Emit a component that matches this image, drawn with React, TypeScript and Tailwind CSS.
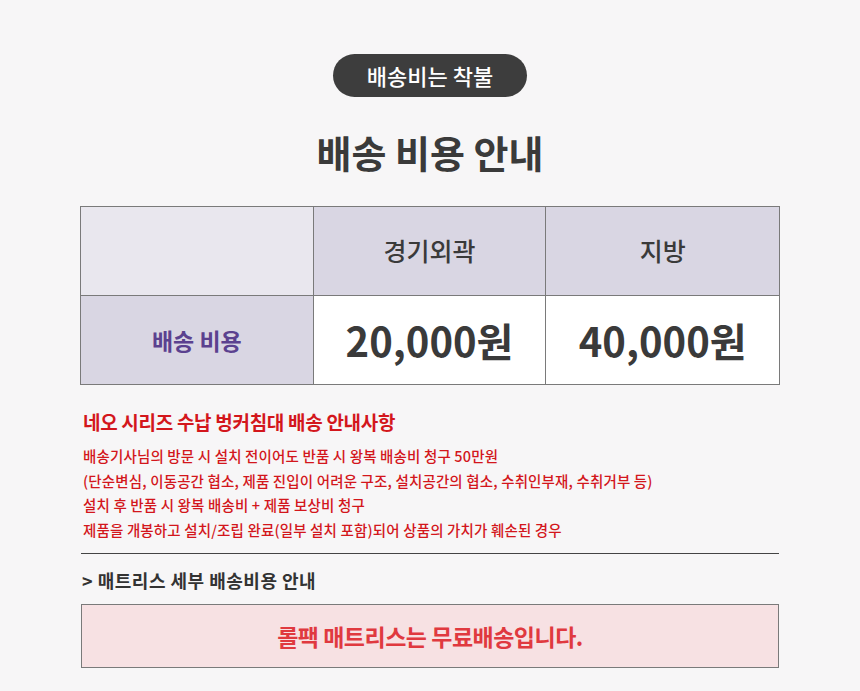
import React from 'react';

const font = { fontFamily: '"Noto Sans CJK KR", "Noto Sans", sans-serif' };

const notices = [
    '배송기사님의 방문 시 설치 전이어도 반품 시 왕복 배송비 청구 50만원',
    '(단순변심, 이동공간 협소, 제품 진입이 어려운 구조, 설치공간의 협소, 수취인부재, 수취거부 등)',
    '설치 후 반품 시 왕복 배송비 + 제품 보상비 청구',
    '제품을 개봉하고 설치/조립 완료(일부 설치 포함)되어 상품의 가치가 훼손된 경우',
];

export default function App() {
    return (
        <div style={font} className="min-h-[691px] w-full bg-[#f7f6f7] flex flex-col items-center pt-[54px]">
            {/* badge */}
            <div className="h-[43px] w-[194px] rounded-full bg-[#3d3d3d] text-white text-[22px] font-medium flex items-center justify-center">
                배송비는 착불
            </div>

            <h1 className="mt-[33px] text-[38px] leading-[44px] font-bold text-[#3a3a3a]">배송 비용 안내</h1>

            {/* table */}
            <div className="mt-[32px] w-[700px] grid grid-cols-3 border border-[#7a7a7a]">
                <div className="h-[89px] bg-[#e9e7ee] border-r border-b border-[#7a7a7a]" />
                <div className="h-[89px] bg-[#d9d6e3] border-r border-b border-[#7a7a7a] flex items-center justify-center text-[25px] font-medium text-[#3a3a3a]">경기외곽</div>
                <div className="h-[89px] bg-[#d9d6e3] border-b border-[#7a7a7a] flex items-center justify-center text-[25px] font-medium text-[#3a3a3a]">지방</div>
                <div className="h-[88px] bg-[#d9d6e3] border-r border-[#7a7a7a] flex items-center justify-center text-[23px] font-bold text-[#5b418f]">배송 비용</div>
                <div className="h-[88px] bg-white border-r border-[#7a7a7a] flex items-center justify-center text-[40px] font-bold text-[#3a3a3a]">20,000원</div>
                <div className="h-[88px] bg-white flex items-center justify-center text-[40px] font-bold text-[#3a3a3a]">40,000원</div>
            </div>

            {/* notice */}
            <div className="w-[700px] mt-[24px] px-[3px]">
                <h2 className="text-[19px] leading-[26px] font-bold text-[#d3161c] tracking-[-0.3px]">네오 시리즈 수납 벙커침대 배송 안내사항</h2>
                <div className="mt-[9px] flex flex-col">
                    {notices.map((n) => (
                        <p key={n} className="text-[14.5px] leading-[24.5px] font-medium text-[#d3161c] tracking-[0.15px]">{n}</p>
                    ))}
                </div>
            </div>

            <div className="mt-[11px] w-[698px] h-px bg-[#444]" />

            <div className="w-[700px] mt-[14px] px-[2px] text-[18px] leading-[24px] font-bold text-[#333] tracking-[0.5px]">&gt; 매트리스 세부 배송비용 안내</div>

            <div className="mt-[12px] w-[698px] h-[64px] bg-[#f7e1e3] border border-[#7a7a7a] flex items-center justify-center text-[23px] font-bold text-[#e0393f] tracking-[-0.5px]">
                롤팩 매트리스는 무료배송입니다.
            </div>
        </div>
    );
}
